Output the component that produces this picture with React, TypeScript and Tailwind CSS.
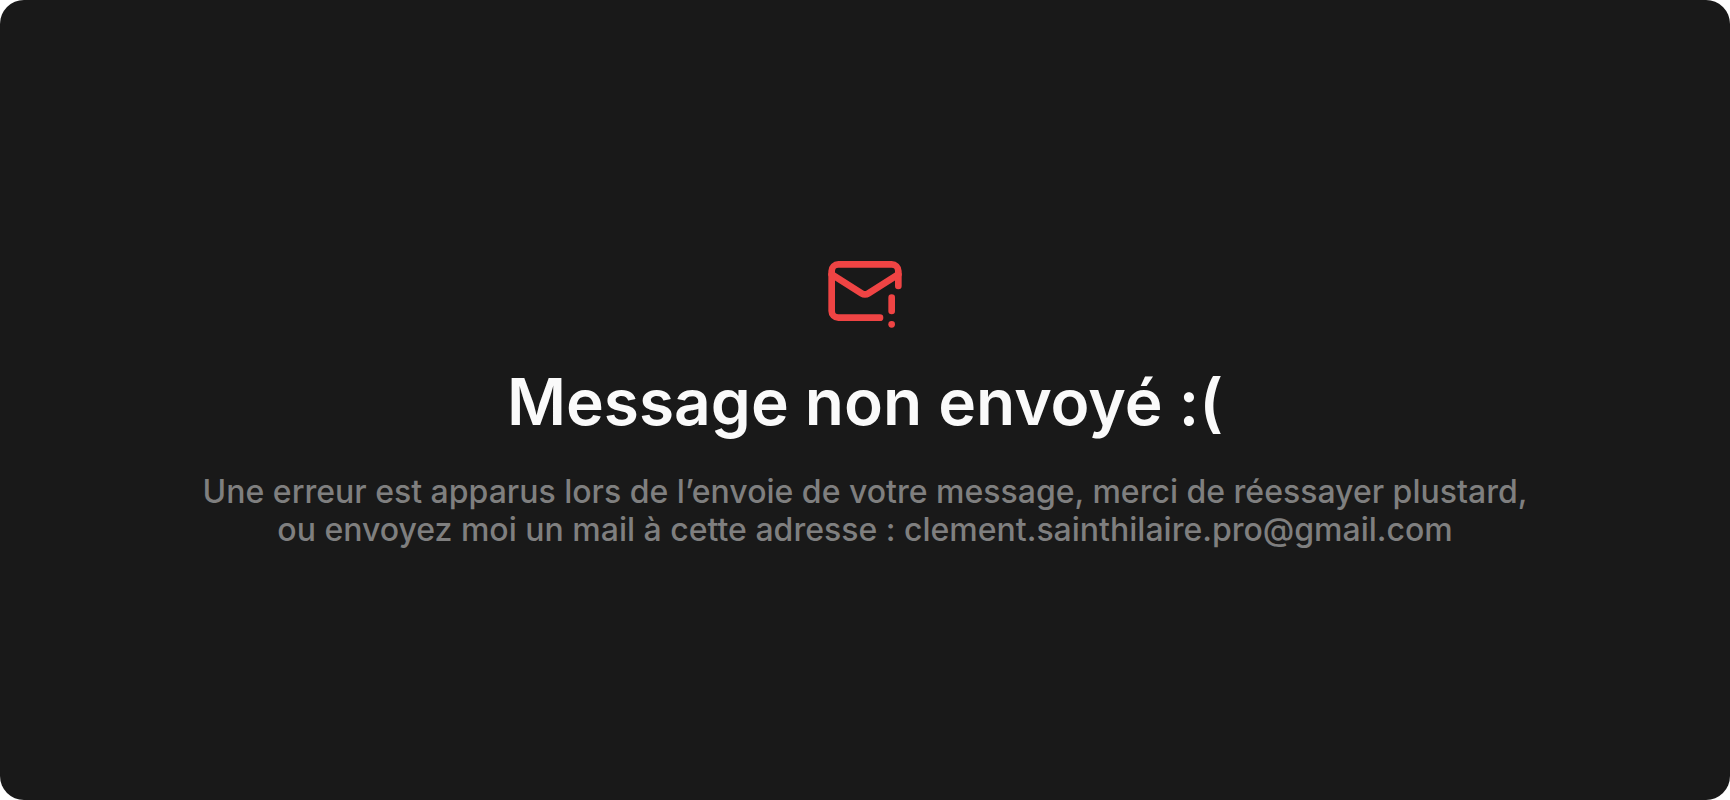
import React from "react";

function MailWarningIcon() {
  return (
    <svg
      className="size-20 text-[#ef4444]"
      viewBox="0 0 24 24"
      fill="none"
      stroke="currentColor"
      strokeWidth="2"
      strokeLinecap="round"
      strokeLinejoin="round"
      aria-hidden="true"
    >
      <path d="M22 10.5V6a2 2 0 0 0-2-2H4a2 2 0 0 0-2 2v12c0 1.1.9 2 2 2h12.5" />
      <path d="m22 7-8.97 5.7a1.94 1.94 0 0 1-2.06 0L2 7" />
      <path d="M20 14v4" />
      <path d="M20 22v.01" />
    </svg>
  );
}

export default function App() {
  return (
    <main className="flex min-h-screen flex-col items-center justify-center rounded-3xl bg-[#191919] px-8 text-center font-['Inter',sans-serif]">
      <MailWarningIcon />
      <h1 className="mt-8 text-[64px] leading-[78px] font-semibold text-[#fafafa]">Message non envoyé :(</h1>
      <p className="mt-8 text-[32px] leading-[38px] font-medium text-[#7f7f7f]">
        Une erreur est apparus lors de l’envoie de votre message, merci de réessayer plustard,
        <br />
        ou envoyez moi un mail à cette adresse : clement.sainthilaire.pro@gmail.com
      </p>
    </main>
  );
}
